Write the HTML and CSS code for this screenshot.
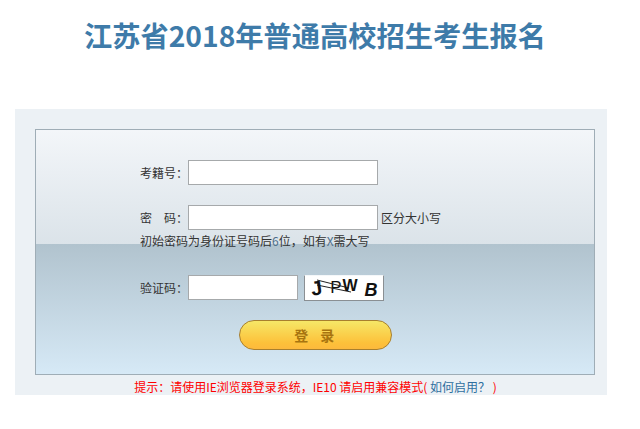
FILE: index.html
```html
<!DOCTYPE html>
<html lang="zh-CN">
<head>
<meta charset="utf-8">
<title>江苏省2018年普通高校招生考生报名</title>
<link rel="stylesheet" href="styles.css">
</head>
<body>
<h1 class="title">江苏省2018年普通高校招生考生报名</h1>
<div class="panel">
  <form class="box">
    <div class="row">
      <label class="label">考籍号&#xFF1A;</label>
      <input class="field" type="text">
    </div>
    <div class="row row-pass">
      <label class="label">密&emsp;码&#xFF1A;</label>
      <input class="field" type="password">
      <span class="note">区分大小写</span>
    </div>
    <p class="hint">初始密码为身份证号码后<span class="alt">6</span>位&#xFF0C;如有<span class="alt">X</span>需大写</p>
    <div class="row row-code">
      <label class="label">验证码&#xFF1A;</label>
      <input class="field field-short" type="text">
      <div class="captcha">
        <svg class="captcha-lines" width="78" height="24" viewBox="0 0 78 24" aria-hidden="true">
          <path d="M12 4 L44 12 M12 9 L46 16" stroke="#222" stroke-width="1" fill="none"/>
        </svg>
        <span class="c1">J</span><span class="c2">P</span><span class="c3">W</span><span class="c4">B</span>
      </div>
    </div>
    <div class="actions">
      <button class="login" type="button">登&ensp;录</button>
    </div>
  </form>
  <p class="notice">提示&#xFF1A;请使用IE浏览器登录系统&#xFF0C;IE10 请启用兼容模式( <a class="help">如何启用&#xFF1F;</a> )</p>
</div>
</body>
</html>
```
FILE: styles.css
```css
* { box-sizing: border-box; }
html, body { margin: 0; padding: 0; background: #fff; }
body {
  width: 622px;
  height: 429px;
  overflow: hidden;
  font-family: "Noto Sans CJK SC", "Liberation Sans", sans-serif;
  font-size: 12px;
  color: #333;
}
.title {
  margin: 0;
  height: 109px;
  padding: 15px 0 0 8px;
  text-align: center;
  font-size: 28.25px;
  line-height: 40px;
  font-weight: 700;
  color: #3e7ba9;
}
.panel {
  width: 592px;
  height: 286px;
  margin-left: 15px;
  padding: 20px 12px 0 20px;
  background: #ecf1f5;
}
.box {
  height: 246px;
  padding: 30px 0 0 104px;
  border: 1px solid #9fadb6;
  background: linear-gradient(to bottom, #f3f6f9 0, #dbe3e9 114px, #b1c3ce 114px, #d6e9f6 100%);
}
.row { display: flex; align-items: center; height: 25px; }
.row-pass { margin-top: 20px; }
.row-code { margin-top: 26px; }
.label { width: 48px; line-height: 17px; white-space: nowrap; }
.field {
  width: 190px;
  height: 25px;
  padding: 0 4px;
  border: 1px solid #a6a9ab;
  background: #fff;
  outline: none;
}
.field-short { width: 110px; }
.note { margin-left: 3px; }
.hint { margin: 2px 0 0; height: 17px; line-height: 17px; white-space: nowrap; }
.alt { color: #4f6f8a; }
.captcha {
  position: relative;
  display: flex;
  width: 80px;
  height: 26px;
  margin: 1px 0 0 6px;
  border: 1px solid #8a8f93;
  border-top-color: #f4f7f9;
  background: #fff;
  font-family: "Liberation Sans", sans-serif;
  font-size: 20px;
  font-weight: 700;
  color: #111;
  line-height: 24px;
}
.captcha-lines { position: absolute; left: 0; top: 0; }
.c1, .c2, .c3, .c4 { display: block; }
.c1 { margin-left: 6px; transform: rotate(-8deg); }
.c2 { margin-left: 8px; font-weight: 400; font-size: 17px; }
.c3 { margin-left: 1px; font-size: 16px; transform: translateY(-2px); }
.c4 { margin-left: 7px; font-style: italic; font-size: 18px; transform: translateY(2px); }
.actions { margin-top: 20px; padding-left: 99px; }
.login {
  display: block;
  width: 153px;
  height: 30px;
  padding: 0;
  border: 1px solid #a87f2e;
  border-radius: 15px;
  background: linear-gradient(to bottom, #f6e767 0, #fdc13a 78%, #fdb93c 100%);
  font-family: "Noto Sans CJK SC", sans-serif;
  font-size: 14px;
  font-weight: 700;
  letter-spacing: 2.5px;
  color: #a8740f;
}
.notice {
  margin: 5px 0 0;
  padding-left: 1px;
  text-align: center;
  font-size: 12px;
  line-height: 14px;
  color: #f00;
  white-space: nowrap;
}
.help { color: #2f6f9f; }
```
